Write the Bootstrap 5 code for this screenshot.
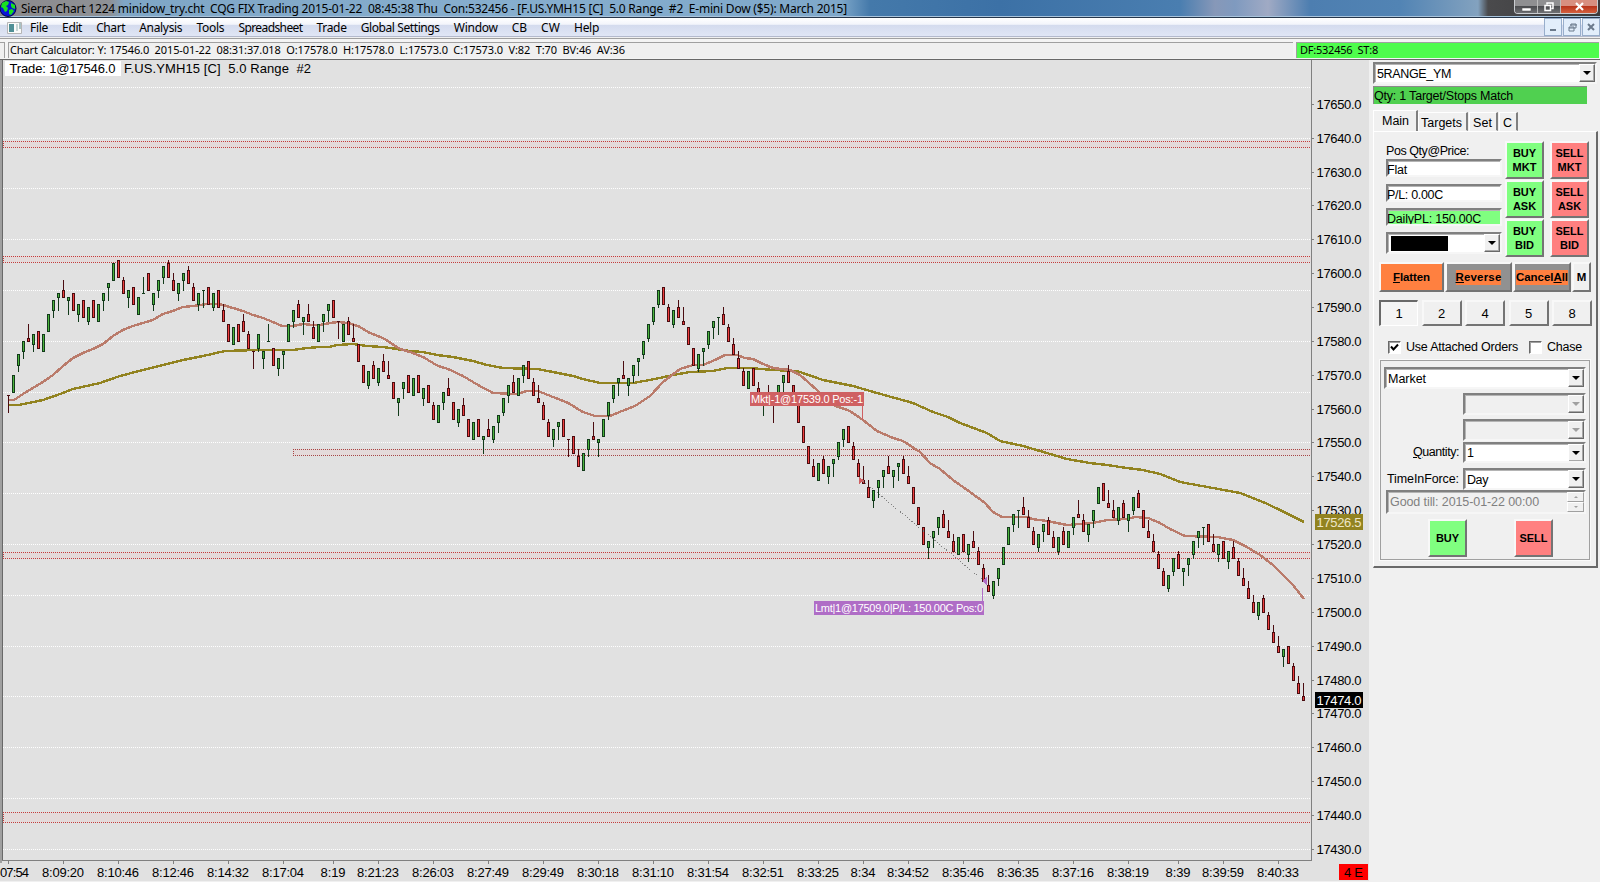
<!DOCTYPE html>
<html lang="en">
<head>
  <meta charset="UTF-8">
  <title>Sierra Chart 1224 minidow_try.cht</title>
  <link href="https://cdn.jsdelivr.net/npm/bootstrap@5.3.0/dist/css/bootstrap.min.css" rel="stylesheet">
  <style>
    body { width: 1600px; height: 882px; overflow: hidden; background: #f0f0f0; color: #000; font: 12px/14px "Noto Sans", "Open Sans", sans-serif; }
    [data-w] { white-space: pre; display: inline-block; }
    u { text-underline-offset: 1px; }

    /* window frame */
    .titlebar { height: 18px; line-height: 17px; border-bottom: 1px solid #26364a; box-shadow: inset 0 -1px #a9c4dc;
      background: linear-gradient(90deg, #8b8a8c 0, #8e9196 110px, #7fa6c6 124px, #86aece 500px, #7fa8ca 840px, #4479aa 870px, #3c71a6 1000px, #4a7eb0 1180px, #8798b8 1215px, #7f9abf 1235px, #a0aac4 1268px, #4d7eb0 1310px, #5284b4 1400px, #83a2bf 1478px, #4a4a4c 1488px, #3a3a3c 1600px); }
    .wbtns { height: 14px; border: 1px solid #c9ccd0; border-top: 0; border-radius: 0 0 4px 4px; overflow: hidden; width: 84px; margin-right: 2px; }
    .wbtns span { display: flex; align-items: center; justify-content: center; background: linear-gradient(#8f8f91 45%, #4c4d50 50%, #6f7073); border-right: 1px solid #bbb; width: 23px; }
    .wbtns span:last-child { flex: 1; border: 0; background: linear-gradient(#d88f80 45%, #b9351c 50%, #d5603e); }
    .menubar { height: 19px; background: linear-gradient(#fff 0, #f3f5fb 35%, #d4dbee 40%, #e0e6f5 100%); border-bottom: 1px solid #b3b9cc; padding-left: 7px; }
    .menus { gap: 14.1px; margin-left: 8px; line-height: 19px; }
    .mdi { gap: 1px; }
    .mdi span { width: 18px; height: 18px; border: 1px solid #98aecb; background: #e2eefb; display: flex; align-items: center; justify-content: center; }
    .toolrow { height: 22px; border-top: 1px solid #a0a0a0; border-bottom: 1px solid #696969; padding: 3px 1px 1px 0; gap: 3px; margin-top: 1px; background: #f4f4f4; font-size: 11px; line-height: 14px; }
    .toolrow > div { border-top: 1px solid #a0a0a0; border-left: 1px solid #a0a0a0; background: #f0f0f0; height: 16px; }
    .toolrow [data-w] { line-height: 13px; vertical-align: top; }
    .tool-grip { width: 5px; border-left: 0 !important; border-right: 1px solid #a0a0a0; }
    .tool-calc { width: 1285px; padding-left: 1px; }
    .tool-df { background: #4efc4c !important; padding-left: 3px; }

    /* chart */
    .plot { width: 1369px; height: 821px; background: #e1e1e1; flex: none; }
    .plot text { font-family: "Liberation Sans", Arial, sans-serif; font-size: 13px; }

    /* trade window */
    .trade { width: 231px; padding: 2px 3px 0 4px; font: 12.5px/15px "Liberation Sans", Arial, sans-serif; }
    .sunk { background: #fff; border: 2px solid; border-color: #808080 #f6f6f6 #f6f6f6 #808080; box-shadow: inset 1px 1px #b4b4b4; overflow: hidden; }
    .combo { display: flex; justify-content: space-between; height: 22px; padding-left: 2px; line-height: 20px; }
    .drop { width: 16px; height: 18px; flex: none; background: #f0f0f0; border: 1px solid; border-color: #fff #696969 #696969 #fff; box-shadow: inset -1px -1px #a8a8a8; display: flex; align-items: center; justify-content: center; }
    .drop::after { content: ""; border: 4px solid transparent; border-top-color: #000; border-bottom: 0; }
    .off { background: #f0f0f0; color: #808080; }
    .off .drop::after { border-top-color: #a0a0a0; }
    .strip { width: 214px; height: 18px; background: #50d050; border-top: 1px solid #8a8a8a; border-left: 1px solid #8a8a8a; margin-top: 2px; line-height: 18px; }
    .tabs { height: 21px; margin-top: 6px; align-items: flex-end; }
    .tabs > div { height: 19px; margin-right: 1px; padding: 0 4px 0 3px; border: 1px solid; border-color: #fff #808080 transparent #fff; border-right-width: 2px; text-align: center; line-height: 20px; flex: none; }
    .tabs > .on { height: 21px; margin-right: 0; padding: 0 7px 0 8px; border-bottom: 0; line-height: 20px; }
    .tabs > .on + div { padding-left: 2px; }
    .sheet { width: 225px; height: 437px; border: 1px solid #fff; border-right: 2px solid #696969; border-bottom: 2px solid #696969; padding-left: 5px; }
    .raised { border: 2px solid; border-color: #f8f8f8 #747474 #747474 #f8f8f8; background: #f0f0f0; display: flex; align-items: center; justify-content: center; text-align: center; }
    .bold-lbl { font-weight: bold; font-size: 11px; line-height: 14px; }
    .sq { width: 39px; height: 38px; }
    .buy { background: #80ff80; } .sell { background: #ff8080; }
    .fields { width: 116px; margin: 12px 0 0 7px; }
    .fields .fld { height: 18px; padding-left: 0; line-height: 18px; }
    .fields .fld + .fld { margin-top: 7px; }
    .fields .fld + .buy { margin-top: 6px; }
    .fields .combo { margin-top: 6px; }
    .fields .fld span { margin-left: -1px; }
    .orders { gap: 1px 6px; grid-template-columns: 39px 39px; margin: 9px 0 0 3px; }
    .acts { margin-top: 5px; height: 30px; gap: 1px; font-size: 11.5px; }
    .acts .hot { background: #ff8040; }
    .acts .grey { background: #919191; }
    .acts .grey span { background: #ff8040; line-height: 15px; }
    .nums { margin-top: 8px; gap: 3.5px; height: 26px; }
    .nums .raised { width: 40px; font-size: 13px; }
    .nums .down { border-color: #696969 #fff #fff #696969; border-width: 2px 1px 1px 2px; background: #f4f4f4; width: 39px; }
    .checks { margin-top: 13px; padding-left: 9px; }
    .chk { width: 13px; height: 13px; flex: none; background: #fff; border: 1px solid; border-color: #696969 #fff #fff #696969; box-shadow: inset 1px 1px #a0a0a0; }
    .checks span { margin-left: 5px; line-height: 16px; }
    .groupbox { width: 210px; height: 200px; border: 1px solid #a0a0a0; outline: 1px solid #fafafa; margin: 5px 0 0 1px; padding: 6px 3px 0 3px; }
    .groupbox .short { width: 123px; }
    .qty { margin: 1px 0 5px; }
    .date { width: 200px; height: 24px; padding-left: 2px; line-height: 20px; }
    .spin div { width: 17px; height: 10px; border: 1px solid; border-color: #fff #a0a0a0 #a0a0a0 #fff; display: flex; align-items: center; justify-content: center; }
    .spin div::after { content: ""; border: 2px solid transparent; border-top: 0; border-bottom-color: #a0a0a0; }
    .spin div + div::after { transform: rotate(180deg); }
    .send { padding: 5px 0 0 44px; gap: 47px; }
  </style>
</head>
<body>
  <div class="titlebar d-flex justify-content-between">
    <div class="d-flex">
      <svg width="17" height="17" viewBox="0 0 17 17"><circle cx="8" cy="8.5" r="8" fill="#0a14d8" stroke="#05083c"/><path d="M2 3l4-2 3 1-1 3-2 1 2 2-1 3-2 1-2-4-2-1zM11 3l4 2v4l-3-1-1-2zM9 10l3-1 2 2-3 4-2-1z" fill="#18e020"/></svg>
      <span class="ms-1" data-w="826">Sierra Chart 1224 minidow_try.cht  CQG FIX Trading 2015-01-22  08:45:38 Thu  Con:532456 - [F.US.YMH15 [C]  5.0 Range  #2  E-mini Dow ($5): March 2015]</span>
    </div>
    <div class="wbtns d-flex">
      <span><svg width="9" height="10"><path d="M0 6h9v3h-9z" fill="#fff" stroke="#444" stroke-width=".5"/></svg></span>
      <span><svg width="10" height="10" fill="none" stroke="#fff" stroke-width="1.5"><path d="M3 2.500V1h6v5.500H7.500M1 3.500h5.500v5H1z"/></svg></span>
      <span><svg width="9" height="9"><path d="M1 1l7 7M8 1l-7 7" stroke="#fff" stroke-width="2.200"/></svg></span>
    </div>
  </div>
  <div class="menubar d-flex justify-content-between">
    <div class="d-flex">
      <svg class="mt-1" width="15" height="12"><path d="M.5.5h14v11h-14z" fill="#fafafa" stroke="#b5b5b5"/><path d="M2 2h5v8H2z" fill="#4f8f96"/><path d="M9 2h2v7H9z" fill="#c5d5d5"/><path d="M13 1v6" stroke="#5b8a90"/></svg>
      <div class="menus d-flex">
        <span data-w="18">File</span><span data-w="20">Edit</span><span data-w="29">Chart</span><span data-w="43">Analysis</span><span data-w="28">Tools</span><span data-w="64">Spreadsheet</span><span data-w="30">Trade</span><span data-w="79">Global Settings</span><span data-w="44">Window</span><span data-w="15">CB</span><span data-w="19">CW</span><span data-w="25">Help</span>
      </div>
    </div>
    <div class="mdi d-flex">
      <span><svg width="8" height="8"><path d="M1 7h6" stroke="#6b7a8c" stroke-width="2"/></svg></span>
      <span><svg width="9" height="9" fill="none" stroke="#6b7a8c"><path d="M3 3V1h5v4H6M2 2h7M1 4h5v4H1zM1 5h5"/></svg></span>
      <span><svg width="8" height="8"><path d="M1 1l6 6M7 1l-6 6" stroke="#6b7a8c" stroke-width="2"/></svg></span>
    </div>
  </div>
  <div class="toolrow d-flex">
    <div class="tool-grip"></div>
    <div class="tool-calc"><span data-w="615">Chart Calculator: Y: 17546.0  2015-01-22  08:31:37.018  O:17578.0  H:17578.0  L:17573.0  C:17573.0  V:82  T:70  BV:46  AV:36</span></div>
    <div class="tool-df flex-grow-1"><span data-w="78">DF:532456  ST:8</span></div>
  </div>

  <div class="d-flex">
    <svg id="plot" class="plot" viewBox="0 60 1369 821"></svg>

    <div class="trade">
      <div class="sunk combo"><span data-w="74">5RANGE_YM</span><div class="drop"></div></div>
      <div class="strip"><span data-w="139">Qty: 1 Target/Stops Match</span></div>
      <div class="tabs d-flex">
        <div class="on"><span data-w="27">Main</span></div>
        <div><span data-w="41">Targets</span></div>
        <div><span data-w="19">Set</span></div>
        <div><span data-w="9">C</span></div>
      </div>
      <div class="sheet">
        <div class="d-flex">
          <div class="fields">
            <div><span data-w="83">Pos Qty@Price:</span></div>
            <div class="sunk fld"><span data-w="20">Flat</span></div>
            <div class="sunk fld"><span data-w="56">P/L: 0.00C</span></div>
            <div class="sunk fld buy"><span data-w="94">DailyPL: 150.00C</span></div>
            <div class="sunk combo"><svg style="margin-top:2px" width="58" height="15"><path d="M1 0h57v15H1z"/></svg><div class="drop"></div></div>
          </div>
          <div class="orders d-grid bold-lbl">
            <div class="raised sq buy">BUY<br>MKT</div><div class="raised sq sell">SELL<br>MKT</div>
            <div class="raised sq buy">BUY<br>ASK</div><div class="raised sq sell">SELL<br>ASK</div>
            <div class="raised sq buy">BUY<br>BID</div><div class="raised sq sell">SELL<br>BID</div>
          </div>
        </div>
        <div class="acts d-flex bold-lbl">
          <div class="raised hot" style="width:65px"><span data-w="37"><u>F</u>latten</span></div>
          <div class="raised grey" style="width:67px"><span data-w="46"><u>R</u>everse</span></div>
          <div class="raised grey" style="width:58px"><span data-w="52">Cancel<u>A</u>ll</span></div>
          <div class="raised" style="width:19px">M</div>
        </div>
        <div class="nums d-flex">
          <div class="raised down">1</div><div class="raised">2</div><div class="raised">4</div><div class="raised">5</div><div class="raised">8</div>
        </div>
        <div class="checks d-flex align-items-center">
          <div class="chk"><svg class="d-block" width="11" height="11"><path d="M2 4.500l2.500 3L9 2.500" fill="none" stroke="#000" stroke-width="2"/></svg></div>
          <span data-w="112">Use Attached Orders</span>
          <div class="chk" style="margin-left:11px"></div>
          <span data-w="35">Chase</span>
        </div>
        <div class="groupbox d-flex flex-column align-items-end">
          <div class="sunk combo w-100"><span data-w="38">Market</span><div class="drop"></div></div>
          <div class="sunk combo short off mt-1"><span></span><div class="drop"></div></div>
          <div class="sunk combo short off mt-1"><span></span><div class="drop"></div></div>
          <div class="qty d-flex align-items-center"><span class="me-1" data-w="46"><u>Q</u>uantity:</span><div class="sunk combo short" style="height:21px;line-height:18px"><span>1</span><div class="drop"></div></div></div>
          <div class="d-flex align-items-center"><span class="me-1" data-w="72">TimeInForce:</span><div class="sunk combo short"><span data-w="21">Day</span><div class="drop"></div></div></div>
          <div class="sunk date off d-flex justify-content-between"><span data-w="149">Good till: 2015-01-22 00:00</span><div class="spin"><div></div><div></div></div></div>
          <div class="send d-flex w-100 bold-lbl">
            <div class="raised sq buy">BUY</div><div class="raised sq sell">SELL</div>
          </div>
        </div>
      </div>
    </div>
  </div>

  <script src="https://cdn.jsdelivr.net/npm/bootstrap@5.3.0/dist/js/bootstrap.bundle.min.js"></script>
  <script>
    const plot = document.getElementById("plot");

    // range bars: [open, close] in points above 17500; every bar spans 5 points
    // dojis carry their low and direction as well: [open, close, low, up]
    const bars = [
      [64,64,59,0],[65,70],[73,76],[77,80],[81,80],[79,82],[83,78],[77,82],[83,88],[89,92],
      [93,94],[95,93],[92,93],[94,89],[88,91],[92,87],[86,90],[92,87],[86,91],[92,94],
      [96,97],[98,103],[104,99],[98,94],[93,95],[96,91],[88,93],[94,94,94,1],[100,95],[91,94],
      [95,98],[99,102],[103,99],[98,95],[94,97],[98,100],[101,97],[96,92],[91,94],[95,95,90,1],
      [96,91],[90,94],[95,90],[89,86],[85,80],[79,84],[85,80],[86,83],[82,78],[77,77,72,0],
      [78,82],[75,77],[80,80,80,1],[78,73],[72,75],[76,77],[80,85],[86,89],[91,87],[86,87],
      [88,86],[84,81],[80,85],[86,88],[89,91],[92,87],[86,86,81,0],[80,85],[86,82],[81,80],
      [79,74],[73,68],[67,71],[73,69],[68,72],[74,71],[70,69],[68,63],[62,63],[66,68],
      [70,65],[64,69],[70,65],[63,66],[67,62],[61,57],[56,61],[62,65],[66,64],[62,57],
      [56,60],[61,58],[57,52],[51,56],[57,52],[51,52],[54,52],[51,55],[56,58],[59,63],
      [64,67],[68,65],[64,69],[70,73],[74,69],[68,64],[63,62],[61,57],[56,52],[51,54],
      [55,56],[57,52],[51,51,46,0],[52,47],[46,43],[42,47],[48,51],[52,51],[50,51],[52,57],
      [58,62],[63,67],[68,69],[70,69],[67,69],[70,73],[74,75],[76,80],[81,85],[86,90],
      [91,95],[96,91],[90,86],[85,89],[90,87],[86,85],[84,79],[78,73],[72,76],[77,78],
      [79,83],[84,86],[87,87,82,1],[88,85],[84,80],[79,76],[75,72],[71,67],[66,71],[72,67],
      [66,63],[61,63],[64,62],[61,61,56,0],[63,67],[68,70],[71,68],[67,62],[61,56],[55,50],
      [49,44],[43,40],[39,44],[45,41],[40,43],[44,45],[46,50],[51,54],[55,50],[49,45],
      [44,40],[39,38],[37,34],[33,36],[37,39],[40,42],[43,41],[40,42],[43,44],[45,41],
      [40,38],[37,32],[31,26],[25,20],[19,21],[22,24],[25,28],[29,25],[24,22],[21,18],
      [17,22],[23,18],[17,20],[21,19],[18,14],[13,9],[8,6],[5,9],[10,13],[14,19],
      [20,25],[26,29],[30,30,25,1],[31,29],[28,25],[24,20],[19,23],[24,26],[27,23],[22,19],
      [18,22],[24,20],[19,24],[25,28],[29,28],[27,24],[23,26],[27,30],[32,37],[38,33],
      [32,31],[30,28],[27,31],[32,28],[27,29],[30,34],[35,31],[30,25],[24,22],[21,18],
      [17,13],[12,8],[7,11],[12,16],[17,13],[12,13],[14,16],[17,21],[22,24],[25,25,20,1],
      [26,21],[20,18],[17,20],[21,16],[15,18],[19,16],[15,11],[10,8],[7,4],[3,0],
      [-1,3],[4,0],[-1,-5],[-6,-9],[-10,-12],[-13,-11],[-10,-15],[-16,-20],[-21,-24],[-25,-26]
    ];

    const fastMa = "8,400 14,400 23,394 33,388 43,382 53,375 63,366 73,358 83,353 93,349 103,344 113,336 123,330 133,326 143,323 153,320 163,314 173,311 183,307 193,306 207,304 218,304 223,305 233,308 243,311 253,315 263,318 273,322 282,326 293,326 303,324 313,325 320,325 330,323 338,322 348,323 358,326 370,333 383,338 400,349 410,352 423,357 438,366 448,369 463,376 478,385 493,393 517,394 527,391 538,391 553,397 568,403 583,412 595,416 610,416 622,411 635,406 650,396 663,382 680,369 693,365 703,365 715,360 725,355 737,355 745,358 753,359 763,364 773,368 790,370 800,375 817,390 833,405 850,411 863,420 877,431 893,438 903,441 920,452 930,463 940,469 953,480 970,492 985,503 993,512 1002,517 1028,517 1032,519 1047,521 1067,525 1093,523 1107,520 1127,519 1135,517 1148,518 1160,523 1170,529 1185,536 1217,537 1233,540 1247,547 1260,555 1273,565 1293,585 1304,599";
    const slowMa = "8,405 19,405 43,400 63,393 73,389 100,383 120,376 143,370 163,365 183,360 203,356 225,351 257,350 293,350 307,348 320,347 329,347 337,345 353,344 367,346 383,347 410,351 423,352 437,355 453,357 473,361 487,365 503,368 537,369 553,372 573,376 583,379 600,383 633,383 655,379 673,375 690,372 713,371 727,368 750,368 773,370 797,371 823,380 853,386 877,393 913,403 933,412 948,417 960,423 987,433 1000,441 1023,446 1040,451 1067,459 1090,463 1107,465 1127,468 1143,470 1160,474 1180,482 1213,488 1240,493 1263,502 1280,510 1304,522";

    const times = [
      ["07:54", 8], ["8:09:20", 63], ["8:10:46", 118], ["8:12:46", 173], ["8:14:32", 228], ["8:17:04", 283],
      ["8:19", 333], ["8:21:23", 378], ["8:26:03", 433], ["8:27:49", 488], ["8:29:49", 543], ["8:30:18", 598],
      ["8:31:10", 653], ["8:31:54", 708], ["8:32:51", 763], ["8:33:25", 818], ["8:34", 863], ["8:34:52", 908],
      ["8:35:46", 963], ["8:36:35", 1018], ["8:37:16", 1073], ["8:38:19", 1128], ["8:39", 1178], ["8:39:59", 1223], ["8:40:33", 1278]
    ];

    // [left, top, bottom, line colour]
    const zones = [[3, 141, 147, "#c43c3c"], [3, 256, 262, "#c43c3c"], [293, 449, 455, "#a84444"], [3, 552, 558, "#c43c3c"], [3, 812, 822, "#c43c3c"]];

    const py = p => Math.floor(612.3 - p * 3.3864);
    const box = (x, y, w, h, fill) => `<rect x="${x}" y="${y}" width="${w}" height="${h}" fill="${fill}"/>`;
    const dots = (x1, y1, x2, y2, stroke, dash = "1 1") => `<path d="M${x1} ${y1}L${x2} ${y2}" stroke="${stroke}" stroke-dasharray="${dash}" fill="none"/>`;
    const label = (x, y, w, str, extra = "") => `<text x="${x}" y="${y}" textLength="${w}" ${extra}>${str}</text>`;

    let out = '<g shape-rendering="crispEdges">';
    for (let p = -70; p <= 155; p += 15) out += dots(3, py(p) + .5, 1311, py(p) + .5, "#fff");
    zones.forEach(([x, t, b, c]) => {
      out += box(x, t, 1311 - x, b - t, "#e4dada");
      out += dots(x, t + .5, 1311, t + .5, c) + dots(x, b + .5, 1311, b + .5, c) + dots(x + .5, t, x + .5, b, c);
    });
    out += `<polyline points="${slowMa}" fill="none" stroke="#928320" stroke-width="2.4"/>`;
    out += `<polyline points="${fastMa}" fill="none" stroke="#ba7b6b" stroke-width="2.4"/>`;

    bars.forEach(([o, c, l, up], i) => {
      const x = 8 + i * 5;
      const doji = o === c;
      const rise = doji ? up : c > o;
      const low = doji ? l : (rise ? c - 5 : c);
      const edge = rise ? "#123a1a" : "#4a0c10";
      out += box(x, py(low + 5), 1, py(low) - py(low + 5) + 1, edge);
      const top = py(Math.max(o, c));
      const h = py(Math.min(o, c)) - top + 1;
      out += box(x - 1, top, 3, h, edge);
      if (h > 2) out += box(x, top + 1, 1, h - 2, rise ? "#4cb43c" : "#ee3e3e");
    });

    // frame and axes
    out += box(0, 60, 2, 803, "#a0a0a0") + box(2, 60, 1, 801, "#696969");
    out += box(1311, 60, 1, 801, "#808080") + box(2, 860, 1310, 1, "#808080");
    for (let p = -70; p <= 150; p += 10) out += box(1312, py(p), 2, 1, "#808080");
    times.forEach(t => out += box(t[1], 861, 1, 3, "#808080"));

    // fills
    out += dots(863, 481, 984, 581, "#808080", "1 2");
    out += '<path d="M859 477l5 3.500-5 3.500z" fill="#cf6062"/><path d="M987 577v8l-5-4z" fill="#af6dc6"/>';
    out += box(862, 400, 1, 20, "#cf6062") + box(750, 392, 114, 14, "#cf6062");
    out += box(982, 588, 1, 14, "#af6dc6") + box(814, 601, 170, 14, "#af6dc6");
    out += box(1339, 864, 29, 16, "#f00") + box(5, 61, 116, 15, "#fff") + "</g>";

    for (let p = -70; p <= 150; p += 10) out += label(1316.5, py(p) + 5, 45, (17500 + p) + ".0");
    out += box(1315, 514, 48, 16, "#928320") + box(1315, 692, 48, 16, "#000");
    out += label(1316.5, 527, 45, "17526.5", 'fill="#eee6c8"') + label(1316.5, 705, 45, "17474.0", 'fill="#fff"');
    times.forEach(([t, x], i) => {
      const w = t.length > 5 ? 42 : 25;
      out += i ? label(x - w / 2, 877, w, t) : label(0, 877, 29, t);
    });
    out += label(1344, 877, 19, "4 E");
    out += label(9.5, 73, 106, "Trade: 1@17546.0") + label(124, 73, 187, "F.US.YMH15 [C]&#160; 5.0 Range&#160; #2");
    out += label(751, 403, 112, "Mkt|-1@17539.0 Pos:-1", 'fill="#fff" style="font-size:11px"');
    out += label(815, 612, 168, "Lmt|1@17509.0|P/L: 150.00C Pos:0", 'fill="#fff" style="font-size:11px"');
    plot.innerHTML = out;

    // tighten each caption to its design width
    document.querySelectorAll("[data-w]").forEach(el => {
      const gap = (el.dataset.w - el.getBoundingClientRect().width) / el.textContent.length;
      el.style.letterSpacing = gap.toFixed(3) + "px";
    });
  </script>
</body>
</html>
